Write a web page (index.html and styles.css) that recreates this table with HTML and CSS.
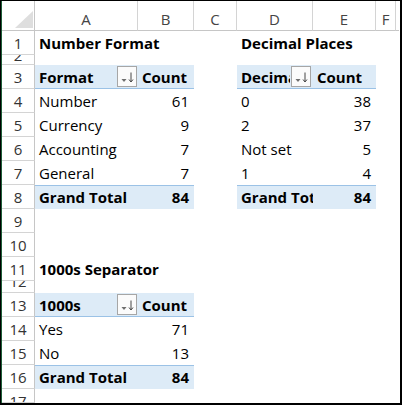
FILE: index.html
```html
<!DOCTYPE html>
<html>
<head>
<meta charset="utf-8">
<link rel="stylesheet" href="styles.css">
</head>
<body>
<div class="frame">
  <div class="sheet">
    <!-- column headers -->
    <div class="corner"><span class="tri"></span></div>
    <div class="ch">A</div><div class="ch">B</div><div class="ch">C</div><div class="ch">D</div><div class="ch">E</div><div class="ch">F</div><div class="ch last"></div>

    <!-- row 1 -->
    <div class="rh">1</div>
    <div class="c b ov">Number Format</div><div class="c"></div><div class="c"></div>
    <div class="c b ov">Decimal Places</div><div class="c"></div><div class="c"></div><div class="c"></div>

    <!-- row 2 -->
    <div class="rh short">2</div>
    <div class="c"></div><div class="c"></div><div class="c"></div><div class="c"></div><div class="c"></div><div class="c"></div><div class="c"></div>

    <!-- row 3 -->
    <div class="rh">3</div>
    <div class="c b hd fl"><span class="txt">Format</span><span class="btn a"><svg width="18" height="19" viewBox="0 0 18 19"><path d="M3.5 12h5l-2.5 3z" fill="#6e6e6e"/><path d="M13 5.5v9" stroke="#444" stroke-width="1"/><path d="M11 12.5l2 2.5 2-2.5" fill="none" stroke="#444" stroke-width="1"/></svg></span></div>
    <div class="c b hd">Count</div><div class="c"></div>
    <div class="c b hd fl d"><span class="txt">Decimal Places</span><span class="btn d"><svg width="18" height="19" viewBox="0 0 18 19"><path d="M3.5 12h5l-2.5 3z" fill="#6e6e6e"/><path d="M13 5.5v9" stroke="#444" stroke-width="1"/><path d="M11 12.5l2 2.5 2-2.5" fill="none" stroke="#444" stroke-width="1"/></svg></span></div>
    <div class="c b hd">Count</div><div class="c"></div><div class="c"></div>

    <!-- row 4 -->
    <div class="rh">4</div>
    <div class="c">Number</div><div class="c r">61</div><div class="c"></div>
    <div class="c">0</div><div class="c r">38</div><div class="c"></div><div class="c"></div>

    <!-- row 5 -->
    <div class="rh">5</div>
    <div class="c">Currency</div><div class="c r">9</div><div class="c"></div>
    <div class="c">2</div><div class="c r">37</div><div class="c"></div><div class="c"></div>

    <!-- row 6 -->
    <div class="rh">6</div>
    <div class="c">Accounting</div><div class="c r">7</div><div class="c"></div>
    <div class="c">Not set</div><div class="c r">5</div><div class="c"></div><div class="c"></div>

    <!-- row 7 -->
    <div class="rh">7</div>
    <div class="c">General</div><div class="c r">7</div><div class="c"></div>
    <div class="c">1</div><div class="c r">4</div><div class="c"></div><div class="c"></div>

    <!-- row 8 -->
    <div class="rh">8</div>
    <div class="c b tot">Grand Total</div><div class="c b r tot">84</div><div class="c"></div>
    <div class="c b tot">Grand Total</div><div class="c b r tot">84</div><div class="c"></div><div class="c"></div>

    <!-- row 9 -->
    <div class="rh">9</div>
    <div class="c"></div><div class="c"></div><div class="c"></div><div class="c"></div><div class="c"></div><div class="c"></div><div class="c"></div>

    <!-- row 10 -->
    <div class="rh">10</div>
    <div class="c"></div><div class="c"></div><div class="c"></div><div class="c"></div><div class="c"></div><div class="c"></div><div class="c"></div>

    <!-- row 11 -->
    <div class="rh">11</div>
    <div class="c b ov">1000s Separator</div><div class="c"></div><div class="c"></div><div class="c"></div><div class="c"></div><div class="c"></div><div class="c"></div>

    <!-- row 12 -->
    <div class="rh short">12</div>
    <div class="c"></div><div class="c"></div><div class="c"></div><div class="c"></div><div class="c"></div><div class="c"></div><div class="c"></div>

    <!-- row 13 -->
    <div class="rh">13</div>
    <div class="c b hd fl"><span class="txt">1000s</span><span class="btn a"><svg width="18" height="19" viewBox="0 0 18 19"><path d="M3.5 12h5l-2.5 3z" fill="#6e6e6e"/><path d="M13 5.5v9" stroke="#444" stroke-width="1"/><path d="M11 12.5l2 2.5 2-2.5" fill="none" stroke="#444" stroke-width="1"/></svg></span></div>
    <div class="c b hd">Count</div><div class="c"></div><div class="c"></div><div class="c"></div><div class="c"></div><div class="c"></div>

    <!-- row 14 -->
    <div class="rh">14</div>
    <div class="c">Yes</div><div class="c r">71</div><div class="c"></div><div class="c"></div><div class="c"></div><div class="c"></div><div class="c"></div>

    <!-- row 15 -->
    <div class="rh">15</div>
    <div class="c">No</div><div class="c r">13</div><div class="c"></div><div class="c"></div><div class="c"></div><div class="c"></div><div class="c"></div>

    <!-- row 16 -->
    <div class="rh">16</div>
    <div class="c b tot">Grand Total</div><div class="c b r tot">84</div><div class="c"></div><div class="c"></div><div class="c"></div><div class="c"></div><div class="c"></div>

    <!-- row 17 -->
    <div class="rh">17</div>
    <div class="c"></div><div class="c"></div><div class="c"></div><div class="c"></div><div class="c"></div><div class="c"></div><div class="c"></div>
  </div>
</div>
</body>
</html>
```

FILE: styles.css
```css
html, body {
  margin: 0;
  padding: 0;
  background: #ffffff;
}

.frame {
  width: 402px;
  height: 405px;
  box-sizing: border-box;
  border-top: 1px solid #000;
  border-left: 1px solid #000;
  border-right: 2px solid #000;
  border-bottom: 2px solid #000;
  overflow: hidden;
  font-family: "Open Sans", "Liberation Sans", sans-serif;
  font-size: 15px;
  color: #000;
}

.sheet {
  display: grid;
  border-left: 1px solid #1e5e38;
  grid-template-columns: 33px 103px 56px 43px 76px 63px 20px 3px;
  grid-template-rows: 30px 24px 10px 24px 24px 24px 24px 24px 24px 24px 24px 24px 12px 24px 24px 24px 24px 14px;
  height: 402px;
  overflow: hidden;
}

.corner {
  position: relative;
  border-right: 1px solid #c6c6c6;
  border-bottom: 1px solid #c6c6c6;
}

.tri {
  position: absolute;
  right: 1px;
  bottom: 2px;
  width: 0;
  height: 0;
  border-left: 18px solid transparent;
  border-bottom: 17px solid #dedede;
}

.ch {
  box-sizing: border-box;
  text-align: center;
  color: #444;
  line-height: 28px;
  padding-top: 4px;
  border-right: 1px solid #d4d4d4;
  border-bottom: 1px solid #c6c6c6;
  overflow: hidden;
}

.ch.last {
  border-right: none;
}

.rh {
  box-sizing: border-box;
  text-align: center;
  color: #333;
  line-height: 25px;
  border-right: 1px solid #c6c6c6;
  border-bottom: 1px solid #d4d4d4;
  overflow: hidden;
}

.rh.short {
  line-height: 0;
  padding-top: 0;
}

.c {
  position: relative;
  box-sizing: border-box;
  line-height: 25px;
  padding: 0 5px 0 4px;
  white-space: nowrap;
  overflow: hidden;
}

.c.ov {
  overflow: visible;
}

.c.fl {
  display: flex;
  padding-right: 23px;
}

.c.fl.d {
  padding-right: 23px;
}

.txt {
  display: block;
  overflow: hidden;
  white-space: nowrap;
  min-width: 0;
}

.b {
  font-weight: 700;
}

.r {
  text-align: right;
}

.hd {
  background: #ddebf7;
  border-bottom: 1px solid #9bc2e6;
}

.tot {
  background: #ddebf7;
  border-top: 1px solid #9bc2e6;
  line-height: 23px;
}

.btn {
  position: absolute;
  top: 1px;
  width: 20px;
  height: 21px;
  box-sizing: border-box;
  border: 1px solid #a6a6a6;
  background: #fbfbfb;
  display: flex;
}

.btn.a {
  right: 1px;
}

.btn.d {
  right: 2px;
}
```
